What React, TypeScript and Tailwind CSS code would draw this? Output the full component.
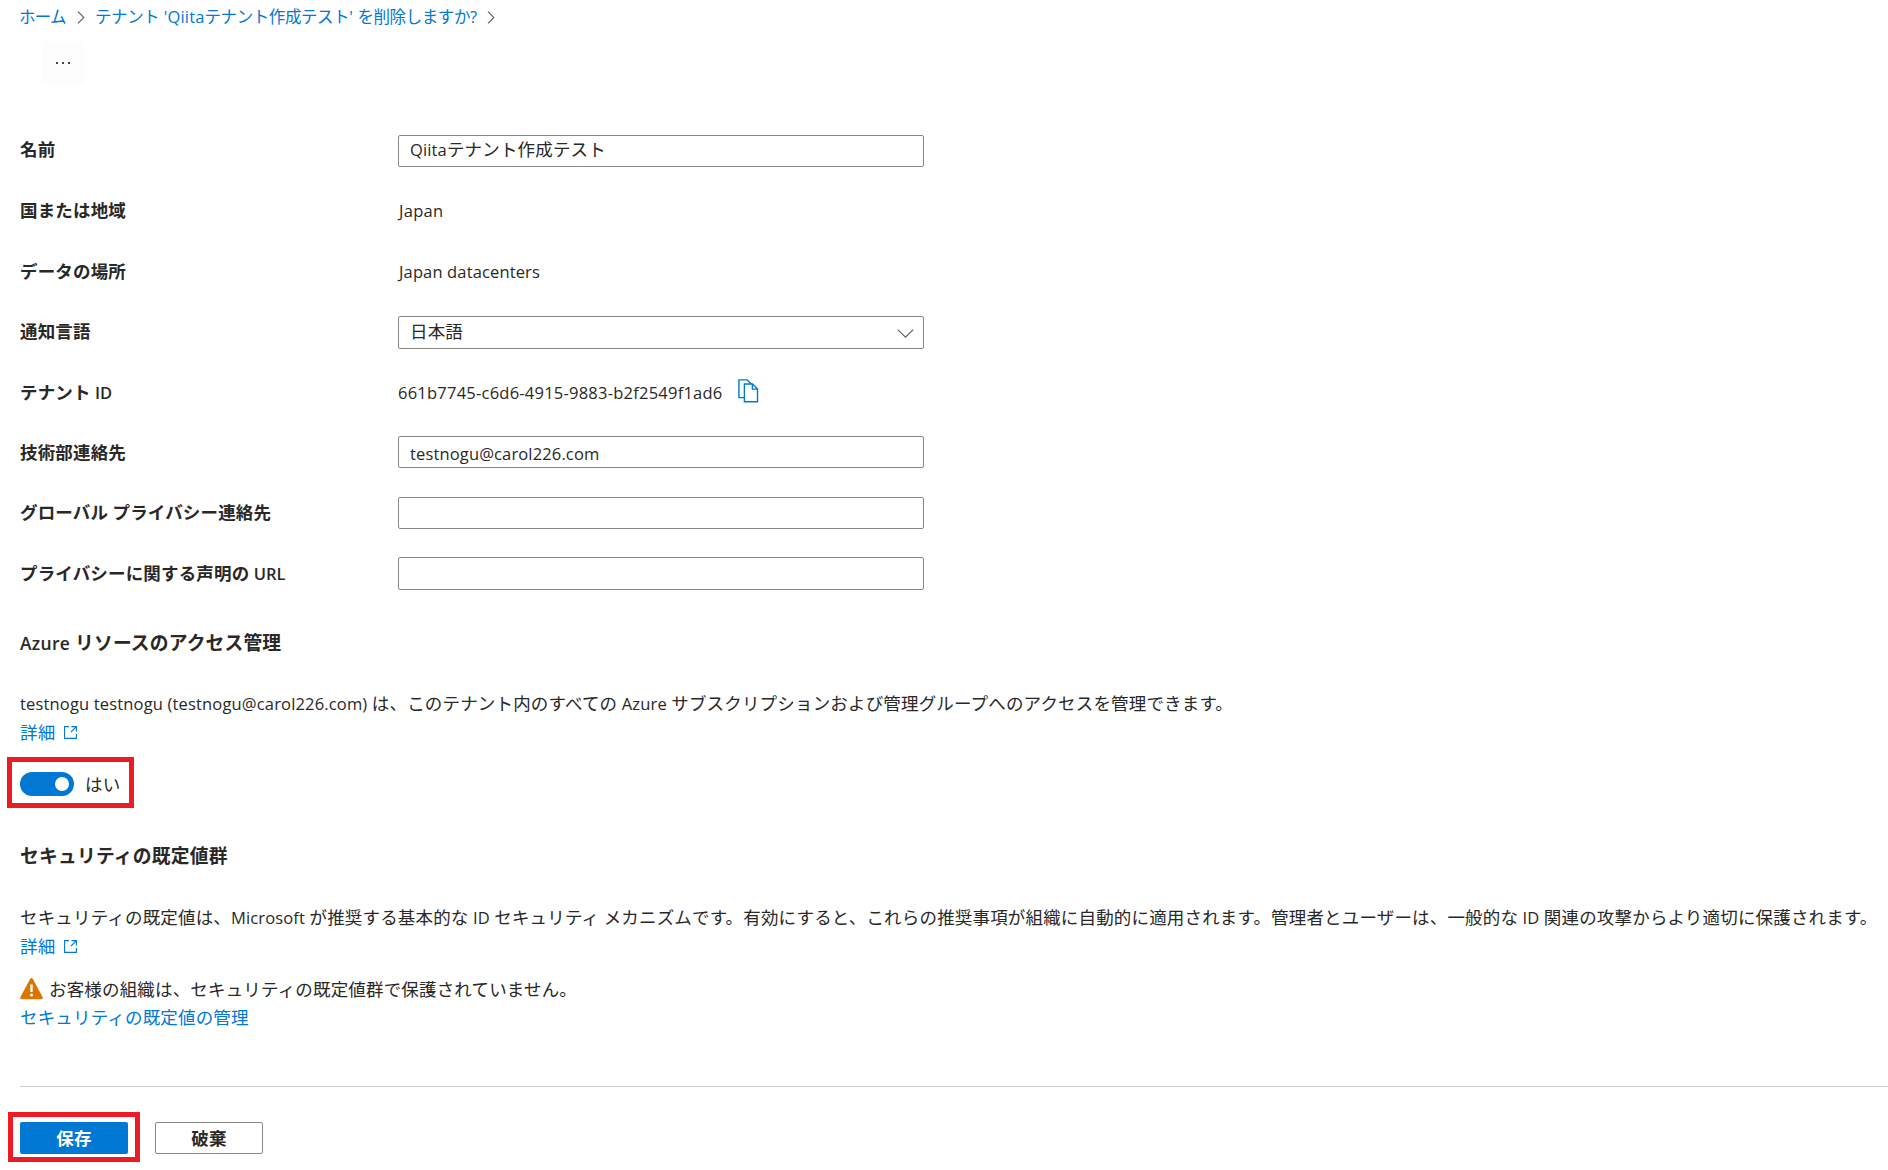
import React from 'react';
import clsx from 'clsx';

// Latin runs are set slightly smaller than the Japanese around them
const Mixed: React.FC<{ text: string; latin?: string }> = ({ text, latin = 'text-[16.5px] tracking-[0.14px]' }) => (
  <>
    {text.split(/([\x20-\x7e]+)/).map((part, i) =>
      i % 2 === 1 ? (
        <span key={i} className={clsx('whitespace-pre', latin)}>{part}</span>
      ) : (
        part
      )
    )}
  </>
);

const Crumb = () => (
  <svg className="h-[13px] w-[8px] shrink-0" viewBox="0 0 8 13" fill="none" stroke="#605e5c" strokeWidth="1.1">
    <path d="M1 0.7L6.8 6.5L1 12.3" />
  </svg>
);

const ExternalIcon = () => (
  <svg className="h-[13px] w-[13px]" viewBox="0 0 13 13" fill="none" stroke="#0078d4" strokeWidth="1.1">
    <path d="M5 0.6H0.6V12.4H12.4V8" />
    <path d="M7.4 0.6H12.4V5.6M12.2 0.8L7 6" />
  </svg>
);

const CopyIcon = () => (
  <svg className="h-[24px] w-[21px]" viewBox="0 0 21 24" fill="none" stroke="#0078d4" strokeWidth="1.4">
    <path d="M6.3 18.6H0.9V0.9H9.2L13.4 5" />
    <path d="M6.4 5H14.6L19.5 10V22.8H6.4Z" />
    <path d="M14.4 5.2V10.1H19.4" />
  </svg>
);

const WarningIcon = () => (
  <svg className="h-[22px] w-[23px]" viewBox="0 0 23 22">
    <path d="M10.1 1.1Q11.5 -1 12.9 1.1L22.6 19Q23.4 21 21.4 21.2H1.6Q-0.4 21 0.4 19Z" fill="#db7500" />
    <path d="M10.1 6.5H12.9L12.6 14H10.4Z" fill="#fff" />
    <circle cx="11.5" cy="16.9" r="1.5" fill="#fff" />
  </svg>
);

const Row: React.FC<{ label: string; labelClass?: string; children?: React.ReactNode }> = ({
  label,
  labelClass = 'mt-px',
  children,
}) => (
  <div className="flex h-[60.3px] items-center">
    <div className={clsx('w-[378px] shrink-0 font-bold', labelClass)}>
      <Mixed text={label} latin="font-semibold text-[16.5px] tracking-[0px]" />
    </div>
    {children}
  </div>
);

const Field: React.FC<{ value?: string; tall?: boolean; children?: React.ReactNode }> = ({ value = '', tall, children }) => (
  <div
    className={clsx(
      'flex w-[526px] items-center justify-between rounded-[2px] border border-[#8a8886] pr-[9px] pl-[11px]',
      tall ? 'mt-[3px] h-[33px]' : 'mt-[2px] h-8'
    )}
  >
    <span className={clsx('h-7', value.includes('@') ? 'mt-px' : '-mt-[3px]')}><Mixed text={value} /></span>
    {children}
  </div>
);

const Details = () => (
  <a className="mt-px flex h-7 items-center gap-[9px] text-[#0078d4]">
    <span className="-mt-px h-7">詳細</span>
    <ExternalIcon />
  </a>
);

export default function App() {
  return (
    <div className="h-[1170px] w-[1888px] overflow-hidden bg-white pl-5 font-['Open_Sans','Noto_Sans_CJK_JP',sans-serif] text-[17.5px] leading-[28px] tracking-[0.17px] whitespace-nowrap text-[#292827]">
      <nav className="flex h-[34px] items-center text-[16.5px] text-[#0078d4]">
        <span className="-ml-px w-[58px] tracking-[-0.7px]">ホーム</span>
        <Crumb />
        <span className="ml-[10px] w-[392px] tracking-[-0.42px]">
          <Mixed text="テナント 'Qiitaテナント作成テスト' を削除しますか?" latin="text-[16.5px] tracking-[0.15px]" />
        </span>
        <Crumb />
      </nav>

      <div className="mt-2 ml-[22px] flex h-[43px] w-[43px] items-center justify-center gap-[4px] bg-[#fdfdfd] pr-px pb-px">
        <i className="size-[2px] bg-[#444]" />
        <i className="size-[2px] bg-[#444]" />
        <i className="size-[2px] bg-[#444]" />
      </div>

      <section className="mt-[34.75px] h-[482.25px]">
        <Row label="名前" labelClass="-mt-px"><Field value="Qiitaテナント作成テスト" /></Row>
        <Row label="国または地域" labelClass="-mt-px"><span className="mt-px ml-px"><Mixed text="Japan" latin="text-[16.5px] tracking-[0.3px]" /></span></Row>
        <Row label="データの場所"><span className="mt-[2px] ml-px"><Mixed text="Japan datacenters" /></span></Row>
        <Row label="通知言語" labelClass="mt-0">
          <Field value="日本語" tall>
            <svg className="mt-[3px] h-[9px] w-[17px]" viewBox="0 0 17 9" fill="none" stroke="#605e5c" strokeWidth="1.1">
              <path d="M0.8 0.6L8.5 8.2L16.2 0.6" />
            </svg>
          </Field>
        </Row>
        <Row label="テナント ID" labelClass="mt-[2px]">
          <span className="mt-[2px] w-[340px]">
            <Mixed text="661b7745-c6d6-4915-9883-b2f2549f1ad6" latin="text-[16.5px] tracking-[0.23px]" />
          </span>
          <CopyIcon />
        </Row>
        <Row label="技術部連絡先" labelClass="mt-[2px]"><Field value="testnogu@carol226.com" /></Row>
        <Row label="グローバル プライバシー連絡先" labelClass="mt-[2px]"><Field /></Row>
        <Row label="プライバシーに関する声明の URL" labelClass="mt-[3px]"><Field tall /></Row>
      </section>

      <h2 className="mt-[27px] h-7 text-[18.75px] font-bold">
        <Mixed text="Azure リソースのアクセス管理" latin="font-semibold text-[17.5px] tracking-[0.3px]" />
      </h2>
      <p className="mt-[32px] h-7">
        <Mixed
          text="testnogu testnogu (testnogu@carol226.com) は、このテナント内のすべての Azure サブスクリプションおよび管理グループへのアクセスを管理できます。"
          latin="text-[16.5px] tracking-[0.16px]"
        />
      </p>
      <Details />

      <div className="relative mt-[24px] flex h-[28px] w-fit items-center">
        <button className="flex h-6 w-[54px] items-center justify-end rounded-full bg-[#0078d4] pr-[5px]">
          <span className="size-[14px] rounded-full bg-white" />
        </button>
        <span className="ml-[11px] -mt-px">はい</span>
        <div className="absolute top-[-13px] left-[-13px] h-[51px] w-[127px] border-[5px] border-[#ed1c24]" />
      </div>

      <h2 className="mt-[44px] h-7 text-[18.75px] font-bold tracking-[0.23px]">セキュリティの既定値群</h2>
      <p className="mt-[33px] h-7">
        <Mixed text="セキュリティの既定値は、Microsoft が推奨する基本的な ID セキュリティ メカニズムです。有効にすると、これらの推奨事項が組織に自動的に適用されます。管理者とユーザーは、一般的な ID 関連の攻撃からより適切に保護されます。" />
      </p>
      <Details />

      <div className="mt-[15px] flex h-7 items-center gap-[6px]">
        <WarningIcon />
        <span className="h-7">お客様の組織は、セキュリティの既定値群で保護されていません。</span>
      </div>
      <a className="block h-7 text-[#0078d4]">セキュリティの既定値の管理</a>

      <footer className="mt-[55px] border-t border-[#cccccc] pt-[35px]">
        <div className="relative flex gap-[27px] font-bold">
          <button className="h-8 w-[108px] rounded-[2px] bg-[#0078d4] leading-[30px] text-white">保存</button>
          <button className="h-8 w-[108px] rounded-[2px] border border-[#8a8886] leading-[28px]">破棄</button>
          <div className="absolute top-[-10px] left-[-12px] h-[50px] w-[132px] border-[5px] border-[#ed1c24]" />
        </div>
      </footer>
    </div>
  );
}
